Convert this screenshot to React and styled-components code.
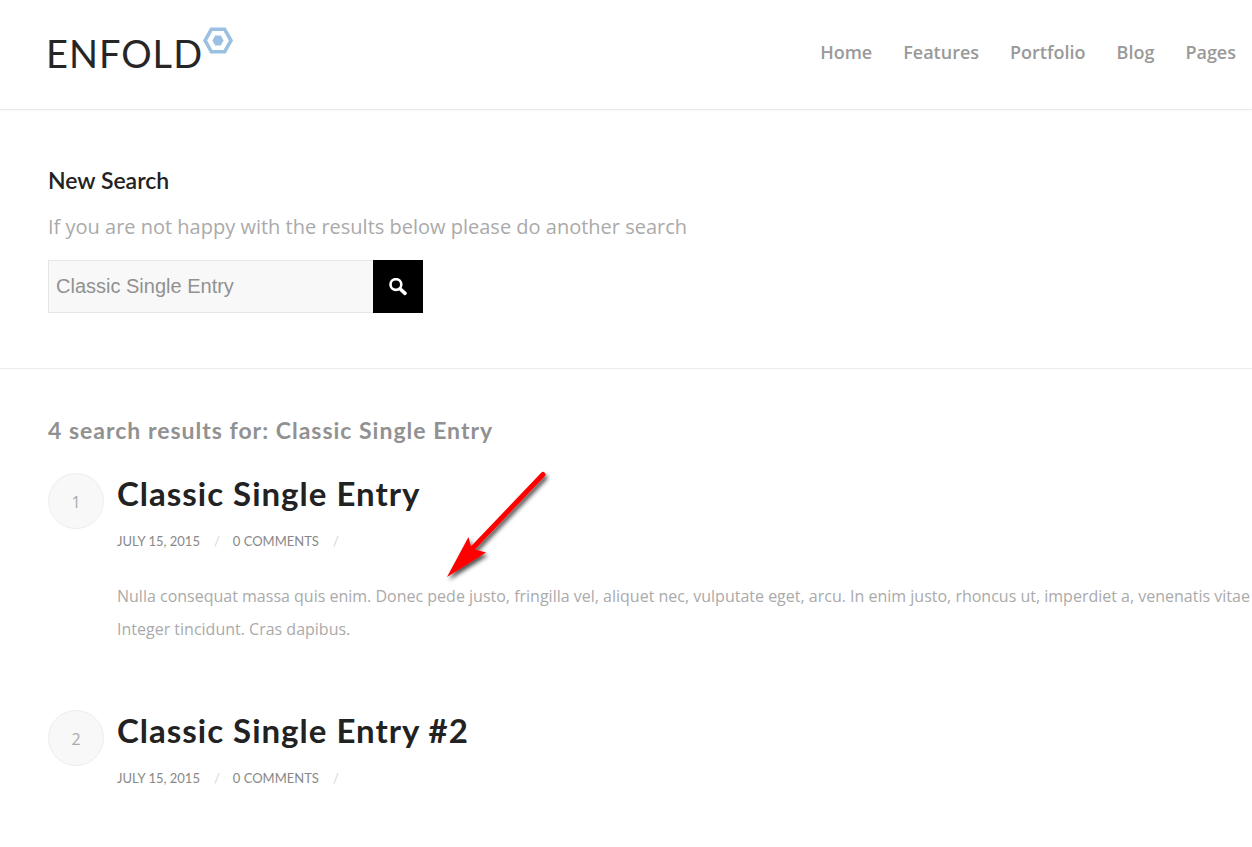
import React from "react";
import styled, { createGlobalStyle } from "styled-components";

const GlobalStyle = createGlobalStyle`
  *, *::before, *::after { box-sizing: border-box; }
  body {
    margin: 0;
    background: #fff;
    color: #aaa;
    font-family: "Open Sans", "Noto Sans", sans-serif;
    overflow-x: hidden;
  }
  h1, h2, h3, p { margin: 0; }
  a { color: inherit; text-decoration: none; }
`;

const Header = styled.header`
  display: flex;
  align-items: center;
  justify-content: space-between;
  height: 110px;
  padding: 0 16px 6px 46px;
  border-bottom: 1px solid #ebebeb;
  box-shadow: 0 1px 2px rgba(0, 0, 0, 0.04);
`;

const Logo = styled.a`
  display: flex;
  align-items: flex-start;
  height: 52px;
  color: #262626;
`;

const LogoText = styled.span`
  padding-top: 5px;
  font: 400 38px/44px Lato, sans-serif;
  letter-spacing: 1px;
`;

const LogoMark = styled.svg`
  width: 32px;
  height: 30px;
`;

const Nav = styled.nav`
  display: flex;
  gap: 31px;
  font-size: 18px;
  font-weight: 600;
  line-height: 26px;
  color: #999;
`;

const SearchSection = styled.section`
  padding: 56px 48px 55px;
  border-bottom: 1px solid #ebebeb;
`;

const SearchTitle = styled.h2`
  font: 600 23px/28px Lato, sans-serif;
  color: #222;
`;

const SearchHint = styled.p`
  margin-top: 16px;
  font-size: 20px;
  line-height: 34px;
`;

const SearchForm = styled.form`
  display: flex;
  width: 375px;
  height: 53px;
  margin-top: 16px;
`;

const SearchInput = styled.input`
  flex: 1;
  min-width: 0;
  padding: 0 7px 2px;
  border: 1px solid #e6e6e6;
  border-right: 0;
  border-radius: 0;
  background: #f8f8f8;
  color: #919191;
  font: 20px/24px "Liberation Sans", Arial, sans-serif;
  outline: 0;
`;

const SearchButton = styled.button`
  display: flex;
  align-items: center;
  justify-content: center;
  width: 50px;
  padding: 0;
  border: 0;
  background: #000;
`;

const Results = styled.main`
  padding: 46px 48px;
`;

const ResultsTitle = styled.h1`
  font: 700 23px/30px Lato, sans-serif;
  letter-spacing: 1px;
  color: #919191;
`;

const Entry = styled.article`
  display: flex;
  align-items: flex-start;
  gap: 13px;
  margin-top: ${(p) => (p.$first ? "28px" : "64px")};
`;

const Counter = styled.span`
  flex: none;
  width: 56px;
  height: 56px;
  border: 1px solid #ededed;
  border-radius: 50%;
  background: #f8f8f8;
  font-size: 16px;
  line-height: 56px;
  text-align: center;
`;

const EntryTitle = styled.h2`
  font: 700 33px/40px Lato, sans-serif;
  letter-spacing: 1px;
  color: #222;
`;

const Meta = styled.div`
  display: flex;
  margin-top: 18px;
  font: 400 13px/20px Lato, sans-serif;
  color: #888;
  text-transform: uppercase;
`;

const Slash = styled.span`
  margin: 0 13px 0 14px;
  color: #d4d4d4;
`;

const Excerpt = styled.p`
  margin-top: 29px;
  font-size: 16px;
  line-height: 33px;
  white-space: nowrap;
`;

const Arrow = styled.svg`
  position: absolute;
  left: 438px;
  top: 462px;
  width: 120px;
  height: 125px;
  pointer-events: none;
`;

const links = ["Home", "Features", "Portfolio", "Blog", "Pages"];

const entries = [
  {
    title: "Classic Single Entry",
    excerpt: [
      "Nulla consequat massa quis enim. Donec pede justo, fringilla vel, aliquet nec, vulputate eget, arcu. In enim justo, rhoncus ut, imperdiet a, venenatis vitae",
      "Integer tincidunt. Cras dapibus.",
    ],
  },
  { title: "Classic Single Entry #2" },
];

export default function App() {
  return (
    <>
      <GlobalStyle />
      <Header>
        <Logo href="#">
          <LogoText>ENFOLD</LogoText>
          <LogoMark viewBox="0 0 32 30" aria-hidden="true">
            <path d="M8.4 3.2H21.6L28 14.5L21.6 25.8H8.4L2 14.5Z" fill="none" stroke="#9ac1e1" strokeWidth="3.6" />
            <path d="M12.2 9.5H17.8L20.6 14.5L17.8 19.5H12.2L9.4 14.5Z" fill="#9ac1e1" />
          </LogoMark>
        </Logo>
        <Nav>
          {links.map((l) => (
            <a key={l} href="#">{l}</a>
          ))}
        </Nav>
      </Header>
      <SearchSection>
        <SearchTitle>New Search</SearchTitle>
        <SearchHint>If you are not happy with the results below please do another search</SearchHint>
        <SearchForm onSubmit={(e) => e.preventDefault()}>
          <SearchInput aria-label="Search" defaultValue="Classic Single Entry" />
          <SearchButton type="submit" aria-label="Submit search">
            <svg width="18" height="18" viewBox="0 0 18 18" fill="none" stroke="#fff">
              <circle cx="6.9" cy="6.5" r="5.4" strokeWidth="2.6" />
              <path d="M11 10.8L16 15.4" strokeWidth="3.6" strokeLinecap="round" />
            </svg>
          </SearchButton>
        </SearchForm>
      </SearchSection>
      <Results>
        <ResultsTitle>4 search results for: Classic Single Entry</ResultsTitle>
        {entries.map((e, i) => (
          <Entry key={e.title} $first={i === 0}>
            <Counter>{i + 1}</Counter>
            <div>
              <EntryTitle><a href="#">{e.title}</a></EntryTitle>
              <Meta>
                <time dateTime="2015-07-15">July 15, 2015</time>
                <Slash>/</Slash>
                <a href="#">0 Comments</a>
                <Slash>/</Slash>
              </Meta>
              {e.excerpt && (
                <Excerpt>{e.excerpt[0]}<br />{e.excerpt[1]}</Excerpt>
              )}
            </div>
          </Entry>
        ))}
      </Results>
      <Arrow viewBox="0 0 120 125" aria-hidden="true">
        <defs>
          <filter id="arrow-shadow" x="-20%" y="-20%" width="140%" height="140%">
            <feDropShadow dx="2" dy="3" stdDeviation="2" floodColor="#000" floodOpacity="0.7" />
          </filter>
        </defs>
        <g filter="url(#arrow-shadow)">
          <path d="M105 12.5L32 89" stroke="#f00" strokeWidth="5" strokeLinecap="round" />
          <path d="M9 115L30.5 75L33.5 86.5L48 90.5Z" fill="#f00" />
        </g>
      </Arrow>
    </>
  );
}
